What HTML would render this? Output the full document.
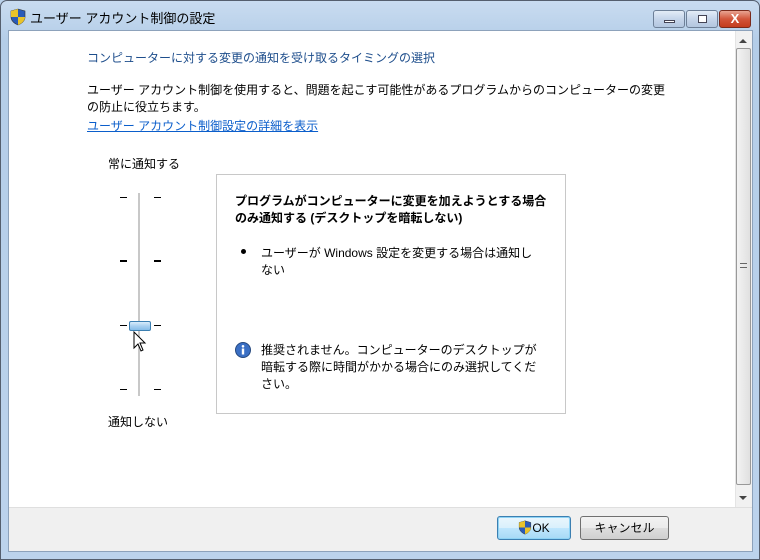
<!DOCTYPE html>
<html><head><meta charset="utf-8"><style>
*{margin:0;padding:0;box-sizing:border-box}
body{width:760px;height:560px;overflow:hidden;font-family:"Liberation Sans","Noto Sans CJK JP",sans-serif;font-size:12px;color:#000;position:relative;background:#b9d1ea}
.frame{position:absolute;left:0;top:0;width:760px;height:560px;background:linear-gradient(#c9dcf0,#b4cde8 40px,#bcd3ec);border:1px solid #555f6e;border-radius:7px 7px 0 0}
.title{position:absolute;left:30px;top:8px;font-size:13px;color:#000}
.client{position:absolute;left:8px;top:30px;width:745px;height:522px;background:#fff;border:1px solid #8da2bb}
.bottom{position:absolute;left:0;top:476px;width:743px;height:44px;background:#f0f0f0;border-top:1px solid #dfdfdf}
.t{position:absolute;white-space:nowrap;line-height:17px}
.blue{color:#1e4e8c}
.link{color:#0b5ecb;text-decoration:underline}
.wb{position:absolute;top:10px;height:18px;width:32px;border:1px solid #6d7f97;border-radius:3px;background:linear-gradient(#e3ecf7,#c5d5ea 50%,#b3c6df)}
.tick{position:absolute;width:7px;height:1px;background:#000}
.btn{position:absolute;top:516px;height:24px;border:1px solid #707070;border-radius:3px;background:linear-gradient(#f2f2f2,#ebebeb 50%,#dddddd 51%,#cfcfcf);text-align:center;line-height:22px;font-size:12px}
</style></head><body>
<div class="frame"></div>
<svg style="position:absolute;left:10px;top:8px" width="16" height="18" viewBox="0 0 16 18"><path d="M8 1 L15 3 V9 C15 13 11 16 8 17 C5 16 1 13 1 9 V3 Z" fill="#2a5bb8" stroke="#333" stroke-width=".6"/><path d="M8 1 V9 H1 V3 Z" fill="#e9c32a"/><path d="M8 9 H15 C15 13 11 16 8 17 Z" fill="#e9c32a"/></svg>
<div class="title">ユーザー アカウント制御の設定</div>
<div class="wb" style="left:653px"><div style="position:absolute;left:10px;top:9px;width:11px;height:3px;background:#fff;border:1px solid #445"></div></div>
<div class="wb" style="left:686px"><div style="position:absolute;left:11px;top:4px;width:9px;height:8px;background:#fff;border:1px solid #445"></div></div>
<div class="wb" style="left:719px;background:linear-gradient(#e8a492,#d2553b 50%,#c43c1e);border-color:#7a2a1c;color:#fff;font-weight:bold;text-align:center;line-height:16px;font-size:13px">X</div>
<div class="client">
 <div class="t blue" style="left:78px;top:19px">コンピューターに対する変更の通知を受け取るタイミングの選択</div>
 <div class="t" style="left:78px;top:51px">ユーザー アカウント制御を使用すると、問題を起こす可能性があるプログラムからのコンピューターの変更</div>
 <div class="t" style="left:78px;top:68px">の防止に役立ちます。</div>
 <div class="t link" style="left:78px;top:87px">ユーザー アカウント制御設定の詳細を表示</div>
 <div class="t" style="left:99px;top:125px">常に通知する</div>
 <div class="t" style="left:99px;top:383px">通知しない</div>
 <div style="position:absolute;left:129px;top:162px;width:2px;height:203px;background:#c8c8c8"></div>
 <div class="tick" style="left:111px;top:166px"></div><div class="tick" style="left:145px;top:166px"></div>
 <div class="tick" style="left:111px;top:229px;height:2px"></div><div class="tick" style="left:145px;top:229px;height:2px"></div>
 <div class="tick" style="left:111px;top:294px"></div><div class="tick" style="left:145px;top:294px"></div>
 <div class="tick" style="left:111px;top:358px"></div><div class="tick" style="left:145px;top:358px"></div>
 <div style="position:absolute;left:120px;top:290px;width:22px;height:10px;border:1px solid #3c7fb1;border-radius:2px;background:linear-gradient(#d9ecfb,#a9d0f0 50%,#86bde8)"></div>
 <svg style="position:absolute;left:124px;top:300px" width="14" height="22" viewBox="0 0 14 22"><path d="M1 1 V17 L5 13 L8 20 L10 19 L7 12 H12 Z" fill="#fff" stroke="#000" stroke-width="1"/></svg>
 <div style="position:absolute;left:207px;top:143px;width:350px;height:240px;border:1px solid #c8c8c8"></div>
 <div class="t" style="left:226px;top:162px;font-weight:bold">プログラムがコンピューターに変更を加えようとする場合</div>
 <div class="t" style="left:226px;top:179px;font-weight:bold">のみ通知する (デスクトップを暗転しない)</div>
 <div style="position:absolute;left:232px;top:218px;width:5px;height:5px;border-radius:50%;background:#000"></div>
 <div class="t" style="left:252px;top:214px">ユーザーが Windows 設定を変更する場合は通知し</div>
 <div class="t" style="left:252px;top:231px">ない</div>
 <svg style="position:absolute;left:226px;top:311px" width="16" height="16" viewBox="0 0 16 16"><circle cx="8" cy="8" r="7.5" fill="#3a6fc4" stroke="#26497f"/><circle cx="8" cy="4.3" r="1.3" fill="#fff"/><rect x="6.8" y="6.5" width="2.4" height="6" fill="#fff"/></svg>
 <div class="t" style="left:252px;top:311px">推奨されません。コンピューターのデスクトップが</div>
 <div class="t" style="left:252px;top:328px">暗転する際に時間がかかる場合にのみ選択してくだ</div>
 <div class="t" style="left:252px;top:345px">さい。</div>
 <div style="position:absolute;left:726px;top:0;width:17px;height:476px;background:#f1f1f1;border-left:1px solid #e4e4e4"></div>
 <div style="position:absolute;left:730px;top:8px;width:0;height:0;border-left:4px solid transparent;border-right:4px solid transparent;border-bottom:4px solid #444"></div>
 <div style="position:absolute;left:727px;top:17px;width:15px;height:437px;border:1px solid #999;border-radius:2px;background:linear-gradient(90deg,#f3f3f3,#e0e0e0)"></div>
 <div style="position:absolute;left:731px;top:232px;width:7px;height:5px;border-top:1px solid #666;border-bottom:1px solid #666"></div>
 <div style="position:absolute;left:730px;top:465px;width:0;height:0;border-left:4px solid transparent;border-right:4px solid transparent;border-top:4px solid #444"></div>
 <div class="bottom"></div>
</div>
<div class="btn" style="left:497px;width:74px;border-color:#3c7fb1;background:linear-gradient(#eaf6fd,#d9f0fc 50%,#bee6fd 51%,#a7d9f5);box-shadow:inset 0 0 0 1px #8ed3f5"><svg style="vertical-align:-3px" width="14" height="15" viewBox="0 0 16 18"><path d="M8 1 L15 3 V9 C15 13 11 16 8 17 C5 16 1 13 1 9 V3 Z" fill="#2a5bb8" stroke="#333" stroke-width=".6"/><path d="M8 1 V9 H1 V3 Z" fill="#e9c32a"/><path d="M8 9 H15 C15 13 11 16 8 17 Z" fill="#e9c32a"/></svg>OK</div>
<div class="btn" style="left:580px;width:89px">キャンセル</div>
</body></html>
